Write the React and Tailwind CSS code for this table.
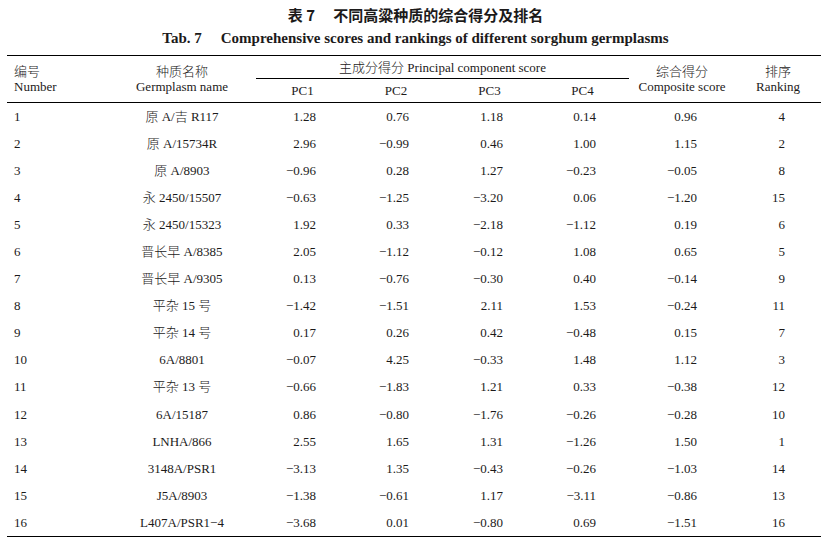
const rows = [
  ["1", "原 A/吉 R117", "1.28", "0.76", "1.18", "0.14", "0.96", "4"],
  ["2", "原 A/15734R", "2.96", "−0.99", "0.46", "1.00", "1.15", "2"],
  ["3", "原 A/8903", "−0.96", "0.28", "1.27", "−0.23", "−0.05", "8"],
  ["4", "永 2450/15507", "−0.63", "−1.25", "−3.20", "0.06", "−1.20", "15"],
  ["5", "永 2450/15323", "1.92", "0.33", "−2.18", "−1.12", "0.19", "6"],
  ["6", "晋长早 A/8385", "2.05", "−1.12", "−0.12", "1.08", "0.65", "5"],
  ["7", "晋长早 A/9305", "0.13", "−0.76", "−0.30", "0.40", "−0.14", "9"],
  ["8", "平杂 15 号", "−1.42", "−1.51", "2.11", "1.53", "−0.24", "11"],
  ["9", "平杂 14 号", "0.17", "0.26", "0.42", "−0.48", "0.15", "7"],
  ["10", "6A/8801", "−0.07", "4.25", "−0.33", "1.48", "1.12", "3"],
  ["11", "平杂 13 号", "−0.66", "−1.83", "1.21", "0.33", "−0.38", "12"],
  ["12", "6A/15187", "0.86", "−0.80", "−1.76", "−0.26", "−0.28", "10"],
  ["13", "LNHA/866", "2.55", "1.65", "1.31", "−1.26", "1.50", "1"],
  ["14", "3148A/PSR1", "−3.13", "1.35", "−0.43", "−0.26", "−1.03", "14"],
  ["15", "J5A/8903", "−1.38", "−0.61", "1.17", "−3.11", "−0.86", "13"],
  ["16", "L407A/PSR1−4", "−3.68", "0.01", "−0.80", "0.69", "−1.51", "16"],
]

const serif = "font-['Liberation_Serif','Noto_Sans_CJK_SC',serif]"

export default function App() {
  return (
    <div className={`w-[831px] h-[545px] bg-white text-[#1c1a1a] ${serif} overflow-hidden`}>
      <div className="pt-[2px] flex justify-center items-center h-[26px] text-[15px] font-bold font-['Noto_Sans_CJK_SC',sans-serif] leading-none">
        <span>表 7</span>
        <span className="ml-[18px]">不同高粱种质的综合得分及排名</span>
      </div>
      <div className="flex justify-center items-center h-[24px] text-[15px] font-bold leading-none">
        <span>Tab. 7</span>
        <span className="ml-[19px]">Comprehensive scores and rankings of different sorghum germplasms</span>
      </div>

      <table className="ml-[7px] mt-[5px] w-[814px] table-fixed border-collapse text-[13px] leading-none">
        <colgroup>
          <col className="w-[101px]" />
          <col className="w-[148px]" />
          <col className="w-[93px]" />
          <col className="w-[94px]" />
          <col className="w-[93px]" />
          <col className="w-[93px]" />
          <col className="w-[106px]" />
          <col className="w-[86px]" />
        </colgroup>
        <thead>
          <tr className="border-t-[1.5px] border-black h-[23px]">
            <th rowSpan={2} className="pl-[7px] text-left font-normal align-middle leading-[16px]">
              <div className="font-['Noto_Sans_CJK_SC',sans-serif] font-light">编号</div>
              <div>Number</div>
            </th>
            <th rowSpan={2} className="text-center font-normal align-middle leading-[16px]">
              <div className="font-['Noto_Sans_CJK_SC',sans-serif] font-light">种质名称</div>
              <div>Germplasm name</div>
            </th>
            <th colSpan={4} className="text-center font-normal border-b border-black">
              <span className="font-['Noto_Sans_CJK_SC',sans-serif] font-light">主成分得分</span> Principal component score
            </th>
            <th rowSpan={2} className="text-center font-normal align-middle leading-[16px]">
              <div className="font-['Noto_Sans_CJK_SC',sans-serif] font-light">综合得分</div>
              <div>Composite score</div>
            </th>
            <th rowSpan={2} className="text-center font-normal align-middle leading-[16px]">
              <div className="font-['Noto_Sans_CJK_SC',sans-serif] font-light">排序</div>
              <div>Ranking</div>
            </th>
          </tr>
          <tr className="h-[24px] border-b-[1.5px] border-black">
            <th className="text-center font-normal">PC1</th>
            <th className="text-center font-normal">PC2</th>
            <th className="text-center font-normal">PC3</th>
            <th className="text-center font-normal">PC4</th>
          </tr>
        </thead>
        <tbody className="border-b-[1.5px] border-black">
          {rows.map((r) => (
            <tr key={r[0]} className="h-[27.1px]">
              <td className="pl-[7px] text-left">{r[0]}</td>
              <td className="text-center font-light">{r[1]}</td>
              <td className="text-right pr-[33px]">{r[2]}</td>
              <td className="text-right pr-[34px]">{r[3]}</td>
              <td className="text-right pr-[33px]">{r[4]}</td>
              <td className="text-right pr-[33px]">{r[5]}</td>
              <td className="text-right pr-[38px]">{r[6]}</td>
              <td className="text-right pr-[36px]">{r[7]}</td>
            </tr>
          ))}
        </tbody>
      </table>
    </div>
  )
}
